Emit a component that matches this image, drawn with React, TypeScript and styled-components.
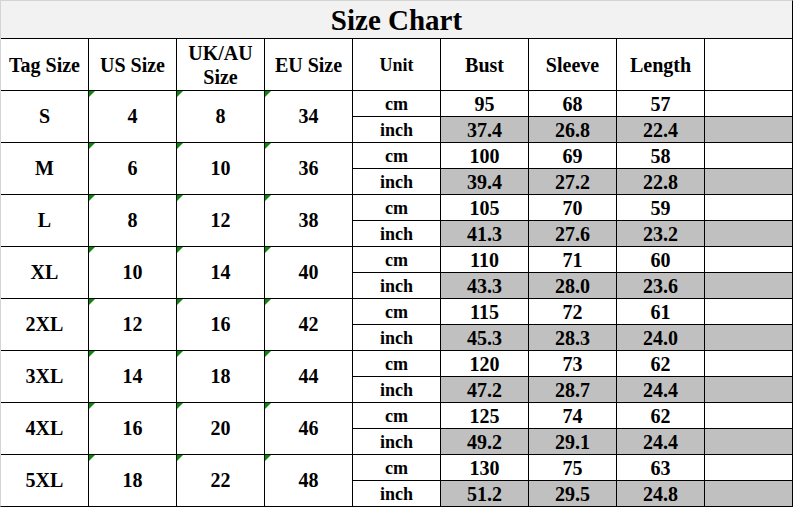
import React from "react";
import styled, { createGlobalStyle } from "styled-components";

const Global = createGlobalStyle`
  html, body {
    margin: 0;
    padding: 0;
    background: #ffffff;
  }
`;

const Sheet = styled.div`
  display: grid;
  grid-template-columns: repeat(9, 87px);
  grid-template-rows: 37px 51px repeat(16, 25px);
  gap: 1px;
  width: 791px;
  background: #000000;
  border-top: 1px solid #d4d4d4;
  border-left: 1px solid #d4d4d4;
  border-right: 1px solid #000000;
  border-bottom: 1px solid #000000;
  font-family: "Liberation Serif", "Times New Roman", serif;
  font-weight: 700;
  color: #000000;
`;

const Title = styled.div`
  grid-column: 1 / -1;
  display: flex;
  align-items: center;
  justify-content: center;
  background: #f2f2f2;
  font-size: 29px;
  line-height: 1;
  padding-top: 1px;
`;

const Head = styled.div<{ $small?: boolean }>`
  display: flex;
  align-items: center;
  justify-content: center;
  text-align: center;
  background: #ffffff;
  font-size: ${(p) => (p.$small ? "18px" : "20px")};
  line-height: 24px;
`;

const SizeCell = styled.div<{ $mark?: boolean }>`
  position: relative;
  grid-row: span 2;
  display: flex;
  align-items: center;
  justify-content: center;
  background: #ffffff;
  font-size: 20px;

  &::before {
    content: "";
    display: ${(p) => (p.$mark ? "block" : "none")};
    position: absolute;
    top: 0;
    left: 0;
    width: 6px;
    height: 6px;
    background: #0a8a0a;
    clip-path: polygon(0 0, 100% 0, 0 100%);
  }
`;

const Cell = styled.div<{ $shade?: boolean; $unit?: boolean }>`
  display: flex;
  align-items: center;
  justify-content: center;
  background: ${(p) => (p.$shade ? "#c0c0c0" : "#ffffff")};
  font-size: ${(p) => (p.$unit ? "18px" : "20px")};
  line-height: 1;
  padding-top: 1px;
`;

type Row = {
  tag: string;
  us: string;
  uk: string;
  eu: string;
  cm: string[];
  inch: string[];
};

const rows: Row[] = [
  { tag: "S", us: "4", uk: "8", eu: "34", cm: ["95", "68", "57"], inch: ["37.4", "26.8", "22.4"] },
  { tag: "M", us: "6", uk: "10", eu: "36", cm: ["100", "69", "58"], inch: ["39.4", "27.2", "22.8"] },
  { tag: "L", us: "8", uk: "12", eu: "38", cm: ["105", "70", "59"], inch: ["41.3", "27.6", "23.2"] },
  { tag: "XL", us: "10", uk: "14", eu: "40", cm: ["110", "71", "60"], inch: ["43.3", "28.0", "23.6"] },
  { tag: "2XL", us: "12", uk: "16", eu: "42", cm: ["115", "72", "61"], inch: ["45.3", "28.3", "24.0"] },
  { tag: "3XL", us: "14", uk: "18", eu: "44", cm: ["120", "73", "62"], inch: ["47.2", "28.7", "24.4"] },
  { tag: "4XL", us: "16", uk: "20", eu: "46", cm: ["125", "74", "62"], inch: ["49.2", "29.1", "24.4"] },
  { tag: "5XL", us: "18", uk: "22", eu: "48", cm: ["130", "75", "63"], inch: ["51.2", "29.5", "24.8"] },
];

const App = () => {
  return (
    <>
      <Global />
      <Sheet>
        <Title>Size Chart</Title>
        <Head>Tag Size</Head>
        <Head>US Size</Head>
        <Head>
          UK/AU
          <br />
          Size
        </Head>
        <Head>EU Size</Head>
        <Head $small>Unit</Head>
        <Head>Bust</Head>
        <Head>Sleeve</Head>
        <Head>Length</Head>
        <Head />
        {rows.map((r) => (
          <React.Fragment key={r.tag}>
            <SizeCell>{r.tag}</SizeCell>
            <SizeCell $mark>{r.us}</SizeCell>
            <SizeCell $mark>{r.uk}</SizeCell>
            <SizeCell $mark>{r.eu}</SizeCell>
            <Cell $unit>cm</Cell>
            {r.cm.map((v, i) => (
              <Cell key={"c" + i}>{v}</Cell>
            ))}
            <Cell />
            <Cell $unit>inch</Cell>
            {r.inch.map((v, i) => (
              <Cell key={"i" + i} $shade>
                {v}
              </Cell>
            ))}
            <Cell $shade />
          </React.Fragment>
        ))}
      </Sheet>
    </>
  );
};

export default App;
